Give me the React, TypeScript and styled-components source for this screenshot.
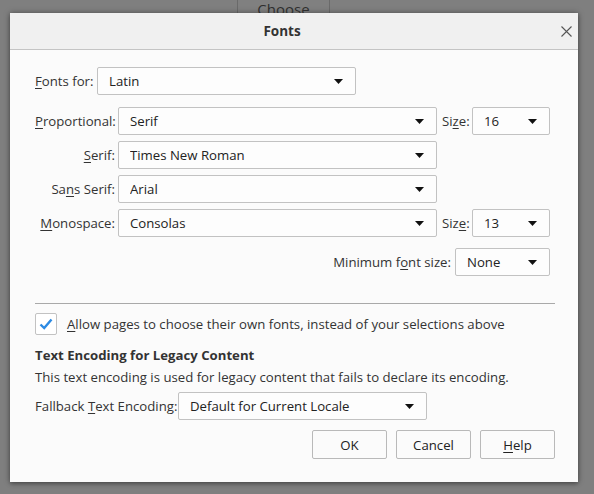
import React, { useState } from 'react';
import styled, { createGlobalStyle } from 'styled-components';

const GlobalStyle = createGlobalStyle`
  html, body {
    margin: 0;
    padding: 0;
    background: #7f7f7f;
  }
  body {
    font-family: "Open Sans", "Noto Sans", "Liberation Sans", sans-serif;
    font-size: 13.2px;
    line-height: 20px;
    color: #2a2a2e;
  }
`;

const Backdrop = styled.div`
  width: 594px;
  height: 494px;
  background: #7f7f7f;
  overflow: hidden;
`;

const BehindStrip = styled.div`
  height: 13px;
  overflow: hidden;
  padding-left: 237px;
`;

const BehindButton = styled.div`
  width: 91px;
  height: 30px;
  border-left: 1px solid #6a6a6a;
  border-right: 1px solid #6a6a6a;
  background: #808080;
  color: #2e2e2e;
  font-size: 15px;
  text-align: center;
  line-height: 26px;
  margin-top: -4px;
`;

const Dialog = styled.div`
  margin-left: 10px;
  width: 568px;
  height: 469px;
  background: #fbfbfb;
  box-shadow: 0 0 6px rgba(0, 0, 0, 0.35), 0 2px 4px rgba(0, 0, 0, 0.25);
  display: flex;
  flex-direction: column;
`;

const TitleBar = styled.div`
  height: 36px;
  background: #f0f0f0;
  border-bottom: 1px solid #c4c4c4;
  display: flex;
  align-items: center;
`;

const Title = styled.div`
  flex: 1;
  text-align: center;
  font-weight: 700;
  font-size: 13.5px;
  color: #333;
`;

const CloseButton = styled.div`
  width: 24px;
  height: 36px;
  display: flex;
  align-items: center;
  justify-content: center;
`;

const Body = styled.div`
  padding: 17px 23px 0 25px;
  display: flex;
  flex-direction: column;
`;

const Row = styled.div<{ $gap?: number }>`
  display: flex;
  align-items: center;
  gap: ${({ $gap }) => $gap ?? 4}px;
`;

const Label = styled.label<{ $width?: number }>`
  color: #333;
  white-space: nowrap;
  ${({ $width }) => ($width ? `width: ${$width}px;` : '')}
`;

const AccessKey = styled.u`
  text-decoration: underline;
  text-underline-offset: 2px;
`;

const FontGrid = styled.div`
  display: grid;
  grid-template-columns: 80px 319px 29px 78px;
  column-gap: 3px;
  row-gap: 6px;
  align-items: center;
  margin-top: 12px;
`;

const GridLabel = styled(Label)`
  text-align: right;
`;

const SizeLabel = styled(Label)`
  padding-left: 2px;
`;

const SelectBox = styled.div<{ $width?: number }>`
  box-sizing: border-box;
  height: 28px;
  width: ${({ $width }) => ($width ? `${$width}px` : '100%')};
  border: 1px solid #c2c2c2;
  border-radius: 2px;
  background: #fdfdfd;
  display: flex;
  align-items: center;
  padding: 0 12px 0 11px;
  color: #222;
`;

const SelectValue = styled.span`
  flex: 1;
  white-space: nowrap;
  overflow: hidden;
`;

const MinRow = styled(Row)`
  justify-content: flex-end;
  margin-top: 11px;
  padding-right: 5px;
`;

const Separator = styled.div`
  height: 1px;
  background: #a9a9a9;
  margin-top: 27px;
`;

const CheckRow = styled(Row)`
  margin-top: 9px;
  gap: 10px;
`;

const CheckBox = styled.div<{ $checked: boolean }>`
  box-sizing: border-box;
  width: 22px;
  height: 22px;
  border: 1px solid #c2c2c2;
  border-radius: 2px;
  background: #fff;
  display: flex;
  align-items: center;
  justify-content: center;
  cursor: pointer;
`;

const Heading = styled.div`
  font-weight: 700;
  color: #333;
  margin-top: 10px;
`;

const Description = styled.div`
  color: #333;
  margin-top: 2px;
`;

const FallbackRow = styled(Row)`
  margin-top: 5px;
`;

const ButtonRow = styled.div`
  display: flex;
  justify-content: flex-end;
  gap: 9px;
  margin-top: 10px;
`;

const Button = styled.button`
  box-sizing: border-box;
  width: 75px;
  height: 29px;
  border: 1px solid #b9b9b9;
  border-radius: 2px;
  background: #fbfbfb;
  font-family: inherit;
  font-size: 13.2px;
  color: #222;
  padding: 0;
`;

const Arrow = () => (
  <svg width="9" height="5" viewBox="0 0 9 5">
    <path d="M0 0 H9 L4.5 5 Z" fill="#111" />
  </svg>
);

const Select = ({ value, width }: { value: string; width?: number }) => (
  <SelectBox $width={width}>
    <SelectValue>{value}</SelectValue>
    <Arrow />
  </SelectBox>
);

const App = () => {
  const [allowPages, setAllowPages] = useState(true);

  return (
    <>
      <GlobalStyle />
      <Backdrop>
        <BehindStrip>
          <BehindButton>Choose</BehindButton>
        </BehindStrip>
        <Dialog>
          <TitleBar>
            <Title>Fonts</Title>
            <CloseButton>
              <svg width="11" height="11" viewBox="0 0 11 11">
                <path d="M0.5 0.5 L10.5 10.5 M10.5 0.5 L0.5 10.5" stroke="#555" strokeWidth="1.1" />
              </svg>
            </CloseButton>
          </TitleBar>
          <Body>
            <Row>
              <Label $width={58}><AccessKey>F</AccessKey>onts for:</Label>
              <Select value="Latin" width={259} />
            </Row>

            <FontGrid>
              <GridLabel><AccessKey>P</AccessKey>roportional:</GridLabel>
              <Select value="Serif" />
              <SizeLabel>Si<AccessKey>z</AccessKey>e:</SizeLabel>
              <Select value="16" />

              <GridLabel><AccessKey>S</AccessKey>erif:</GridLabel>
              <Select value="Times New Roman" />
              <span />
              <span />

              <GridLabel>Sa<AccessKey>n</AccessKey>s Serif:</GridLabel>
              <Select value="Arial" />
              <span />
              <span />

              <GridLabel><AccessKey>M</AccessKey>onospace:</GridLabel>
              <Select value="Consolas" />
              <SizeLabel>Siz<AccessKey>e</AccessKey>:</SizeLabel>
              <Select value="13" />
            </FontGrid>

            <MinRow $gap={4}>
              <Label>Minimum f<AccessKey>o</AccessKey>nt size:</Label>
              <Select value="None" width={95} />
            </MinRow>

            <Separator />

            <CheckRow>
              <CheckBox $checked={allowPages} onClick={() => setAllowPages(!allowPages)}>
                {allowPages && (
                  <svg width="14" height="12" viewBox="0 0 14 12">
                    <path d="M1.5 6.5 L5.2 10 L12.5 1.5" fill="none" stroke="#2c8ae3" strokeWidth="2.4" />
                  </svg>
                )}
              </CheckBox>
              <Label><AccessKey>A</AccessKey>llow pages to choose their own fonts, instead of your selections above</Label>
            </CheckRow>

            <Heading>Text Encoding for Legacy Content</Heading>
            <Description>This text encoding is used for legacy content that fails to declare its encoding.</Description>

            <FallbackRow>
              <Label $width={139}>Fallback <AccessKey>T</AccessKey>ext Encoding:</Label>
              <Select value="Default for Current Locale" width={249} />
            </FallbackRow>

            <ButtonRow>
              <Button>OK</Button>
              <Button>Cancel</Button>
              <Button><AccessKey>H</AccessKey>elp</Button>
            </ButtonRow>
          </Body>
        </Dialog>
      </Backdrop>
    </>
  );
};

export default App;
